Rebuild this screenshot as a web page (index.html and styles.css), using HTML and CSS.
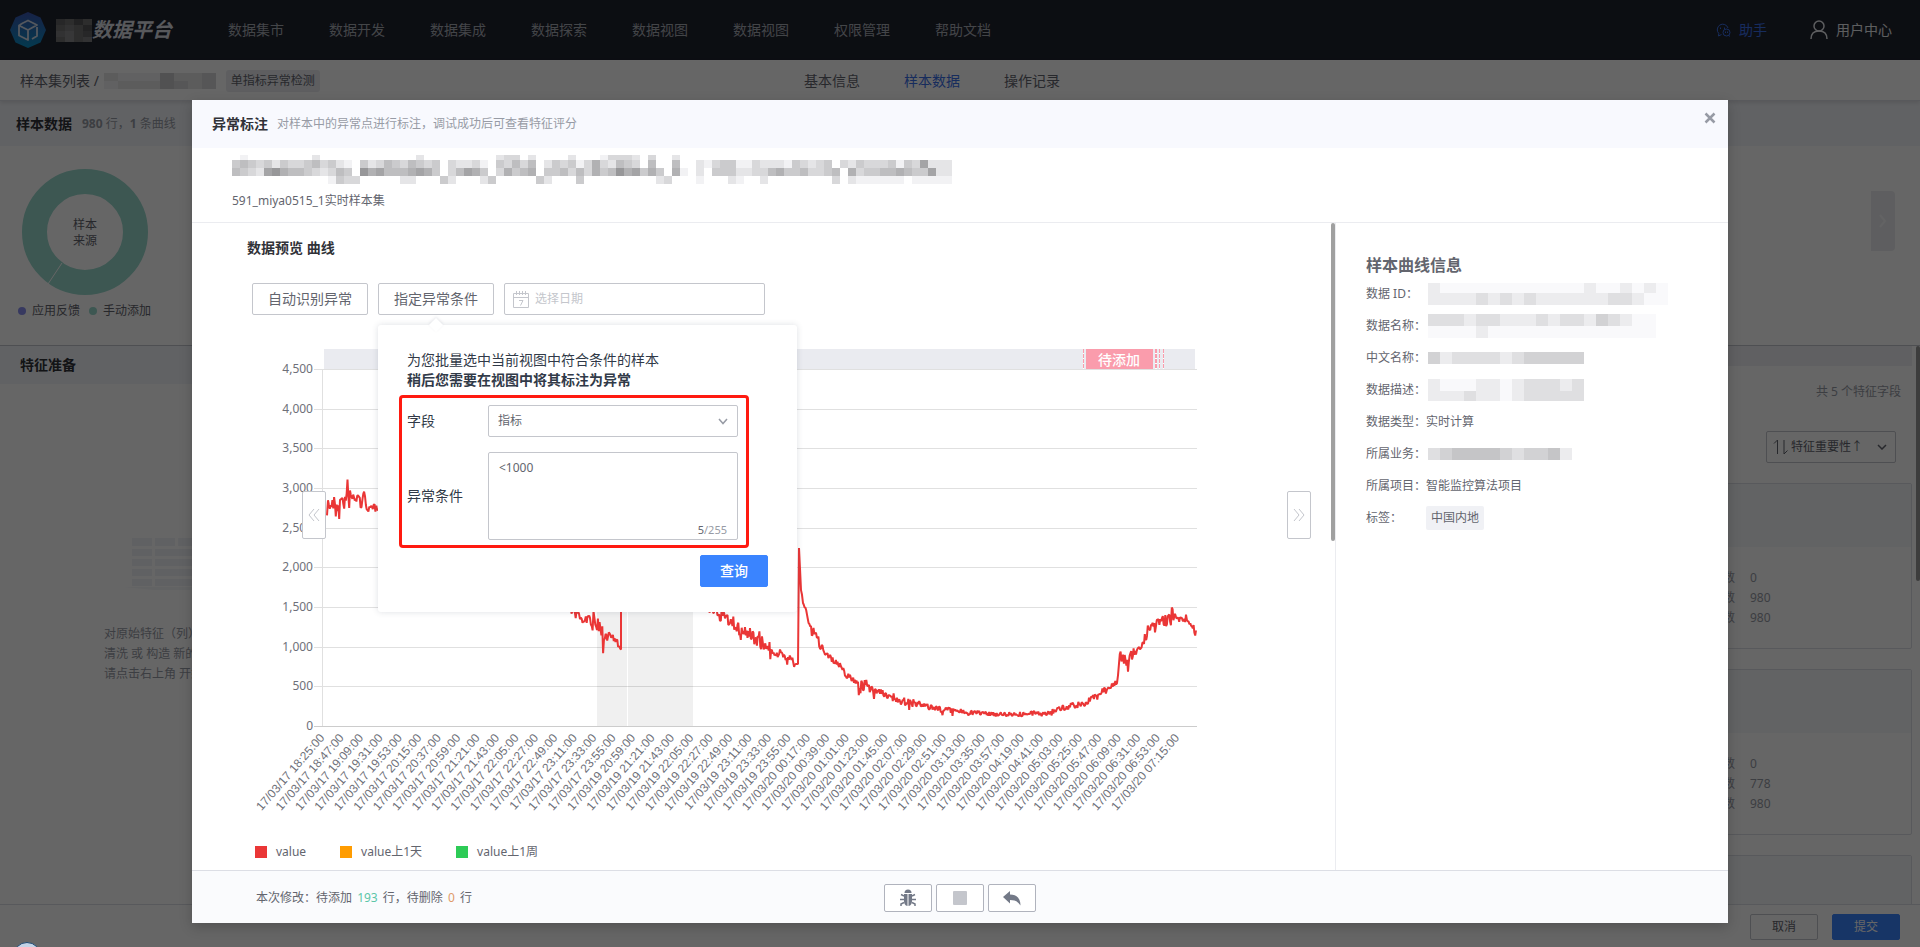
FILE: index.html
```html
<!DOCTYPE html>
<html lang="zh-CN">
<head>
<meta charset="utf-8">
<title>数据平台</title>
<link rel="stylesheet" href="styles.css">
</head>
<body>
<div class="page">
  <header class="topbar">
    <svg class="logo" viewBox="0 0 36 36" aria-hidden="true">
      <defs><linearGradient id="lg" x1="0" y1="0" x2="0" y2="1"><stop offset="0" stop-color="#3b55b0"/><stop offset="1" stop-color="#0a8fc4"/></linearGradient></defs>
      <path d="M18 0 30.500 5.500 36 18 30.500 30.500 18 36 5.500 30.500 0 18 5.500 5.500Z" fill="url(#lg)"/>
      <path d="M12 11.500 18 8.500 27 13 18 18 12 15M27 15v9l-5 3M18 18v10l-9-4.500V13.500l3-2M9 13.500l9 4.500" fill="none" stroke="#d3dcea" stroke-width="1.800" stroke-linejoin="round"/>
    </svg>
    <svg class="mosaic" data-cell="9" data-heights="6,6,6,5" data-rows="cbdb|babd|a9bc|b9ba"></svg>
    <strong class="brand">数据平台</strong>
    <nav class="nav">
      <a href="#">数据集市</a><a href="#">数据开发</a><a href="#">数据集成</a><a href="#">数据探索</a><a href="#">数据视图</a><a href="#">数据视图</a><a href="#">权限管理</a><a href="#">帮助文档</a>
    </nav>
    <a class="helper" href="#">
      <svg width="15" height="14" viewBox="0 0 15 14" fill="none" stroke="currentColor"><path d="M5.500 11.500 2.500 13l.3-2.500A5.500 5.500 0 1 1 12 5M4.500 4.500v1.500M8.500 4.500v1.500"/><circle cx="10.500" cy="9.500" r="3.500"/><path d="M9.500 8.500V10M11.500 8.500V10M12.500 12.500l1.500.8"/></svg>
      <span>助手</span>
    </a>
    <a class="user" href="#">
      <svg width="18" height="20" viewBox="0 0 18 20" fill="none" stroke="currentColor" stroke-width="1.500"><circle cx="9" cy="6" r="5"/><path d="M1 19c0-5 3-8 8-8s8 3 8 8"/></svg>
      <span>用户中心</span>
    </a>
  </header>
  <div class="subbar">
    <a class="crumb" href="#">样本集列表 /</a>
    <svg class="mosaic" data-cell="14" data-heights="8,8" data-rows="21114223|12224323"></svg>
    <span class="tag">单指标异常检测</span>
    <nav class="tabs"><a href="#">基本信息</a><a class="on" href="#">样本数据</a><a href="#">操作记录</a></nav>
  </div>
  <section class="sample">
    <div class="panel-head"><h2>样本数据</h2><span><b>980</b> 行，<b>1</b> 条曲线</span></div>
    <div class="sample-body">
      <div class="donut-box">
        <svg width="126" height="126" viewBox="0 0 126 126">
          <circle cx="63" cy="63" r="50.500" fill="none" stroke="#98d9cd" stroke-width="25"/>
          <path d="M40 94 26 115" stroke="#fff"/>
          <text x="63" y="60" text-anchor="middle">样本</text><text x="63" y="76" text-anchor="middle">来源</text>
        </svg>
        <div class="dots"><i class="dot violet"></i>应用反馈<i class="dot teal"></i>手动添加</div>
      </div>
      <button class="slide" aria-label="下一页"><svg width="8" height="14" viewBox="0 0 8 14" fill="none" stroke="#f8f8fa" stroke-width="2"><path d="m1 1 5 6-5 6"/></svg></button>
    </div>
  </section>
  <section class="features">
    <div class="feat-left">
      <div class="panel-head"><h2>特征准备</h2></div>
      <div class="empty">
        <svg width="120" height="52" viewBox="0 0 120 52" fill="#f0f2f7"><path d="M0 49h110L70 52H30Z" opacity=".6"/><path d="M8 0h20v8H8zM31 0h20v8H31zM54 0h40v8H54zM8 11h20v7H8zM31 11h60v7H31zM8 21h20v7H8zM31 21h60v7H31zM8 31h20v7H8zM31 31h60v7H31zM8 41h20v7H8zM31 41h60v7H31z"/></svg>
        <p>对原始特征（列）进行</p><p>清洗 或 构造 新的特征</p><p>请点击右上角 开始</p>
      </div>
    </div>
    <div class="feat-right">
      <div class="strip"></div>
      <p class="total">共 5 个特征字段</p>
      <button class="sorter">
        <svg width="16" height="16" viewBox="0 0 16 16" fill="none" stroke="currentColor"><path d="M1 4.500 4.500 1v14M11 1v14l3.500-3.500"/></svg>
        <span>特征重要性↑</span>
        <svg class="sort-caret" width="10" height="6" viewBox="0 0 10 6" fill="none" stroke="#63656e" stroke-width="1.500"><path d="m1 1 4 4 4-4"/></svg>
      </button>
      <article class="card"><div class="card-head"></div><dl><dt>数</dt><dd>0</dd><dt>数</dt><dd>980</dd><dt>数</dt><dd>980</dd></dl></article>
      <article class="card"><div class="card-head"></div><dl><dt>数</dt><dd>0</dd><dt>数</dt><dd>778</dd><dt>数</dt><dd>980</dd></dl></article>
      <article class="card"><div class="card-head"></div></article>
    </div>
  </section>
  <footer class="page-foot"><button class="btn-line">取消</button><button class="btn-fill">提交</button></footer>
</div>

<div class="overlay">
  <div class="dialog" role="dialog" aria-labelledby="dlg-title">
    <header class="dlg-head">
      <h1 id="dlg-title">异常标注</h1><span>对样本中的异常点进行标注，调试成功后可查看特征评分</span>
      <button class="close" aria-label="关闭"><svg width="12" height="12" viewBox="0 0 12 12" stroke="#979ba5" stroke-width="2.500"><path d="m1.500 1.500 9 9M10.500 1.500l-9 9"/></svg></button>
    </header>
    <div class="dlg-name">
      <svg class="mosaic" data-cell="8" data-heights="5,8,8,8" data-rows="0100000000200000000000020000000002330200002000133320300200|454342433453421042354354340322310435350243413632543050050021344113222143234032433341437222|543278655432354086755567640357640364560445353645867464061020444223356445334506344556544722|000000000000143300000220004200024000004200040000000002300010002100200000000302111111011111"></svg>
      <p>591_miya0515_1实时样本集</p>
    </div>
    <div class="dlg-body">
      <main class="preview">
        <h2>数据预览 曲线</h2>
        <div class="tools">
          <button class="tool">自动识别异常</button>
          <div class="anchor">
            <button class="tool">指定异常条件</button>
            <form class="pop">
              <p>为您批量选中当前视图中符合条件的样本</p>
              <p><b>稍后您需要在视图中将其标注为异常</b></p>
              <div class="marked">
                <label for="field">字段</label>
                <div class="control">
                  <select id="field"><option>指标</option></select>
                  <svg class="caret" width="10" height="7" viewBox="0 0 10 7" fill="none" stroke="#979ba5" stroke-width="1.500"><path d="m1 1 4 4.500L9 1"/></svg>
                </div>
                <label for="cond">异常条件</label>
                <div class="control">
                  <textarea id="cond">&lt;1000</textarea>
                  <span class="count"><b>5</b>/255</span>
                </div>
              </div>
              <button type="button" class="query">查询</button>
            </form>
          </div>
          <label class="date">
            <svg width="16" height="17" viewBox="0 0 16 17" fill="none" stroke="#c4c6cc"><path d="M.5 2.500h15v14H.5zM.5 6.500h15M3.500 0v4M6.500 0v4M9.500 0v4M12.500 0v4M6 9.500h4L7.500 14.500"/></svg>
            <input type="text" placeholder="选择日期" aria-label="选择日期">
          </label>
        </div>
        <div class="chart">
          <svg id="plot" viewBox="252 340 1060 480" role="img" aria-label="value 曲线"></svg>
          <button class="page-btn prev" aria-label="向前"><svg width="12" height="14" viewBox="0 0 12 14" fill="none" stroke="#c4c6cc"><path d="M6 1 1 7l5 6M11 1 6 7l5 6"/></svg></button>
          <button class="page-btn next" aria-label="向后"><svg width="12" height="14" viewBox="0 0 12 14" fill="none" stroke="#c4c6cc"><path d="m1 1 5 6-5 6M6 1l5 6-5 6"/></svg></button>
        </div>
        <ul class="legend"><li><i class="red"></i>value</li><li><i class="amber"></i>value上1天</li><li><i class="green"></i>value上1周</li></ul>
        <div class="scroll"></div>
      </main>
      <aside class="info">
        <h2>样本曲线信息</h2>
        <dl>
          <dt>数据 ID：</dt><dd><svg class="mosaic" data-cell="12" data-heights="10,12" data-rows="10000000000001001010|11112121211111122100"></svg></dd>
          <dt>数据名称：</dt><dd><svg class="mosaic" data-cell="12" data-heights="12,12" data-rows="2221221112122132100|0000100000000000000"></svg></dd>
          <dt>中文名称：</dt><dd><svg class="mosaic" data-cell="12" data-heights="12" data-rows="3122221233333"></svg></dd>
          <dt>数据描述：</dt><dd><svg class="mosaic" data-cell="12" data-heights="12,10" data-rows="1000110122212|1112110122222"></svg></dd>
          <dt>数据类型：</dt><dd>实时计算</dd>
          <dt>所属业务：</dt><dd><svg class="mosaic" data-cell="12" data-heights="12" data-rows="234444323341"></svg></dd>
          <dt>所属项目：</dt><dd>智能监控算法项目</dd>
          <dt>标签：</dt><dd><span class="chip">中国内地</span></dd>
        </dl>
      </aside>
    </div>
    <footer class="dlg-foot">
      <p>本次修改：待添加 <em class="add">193</em> 行，待删除 <em class="del">0</em> 行</p>
      <div class="acts">
        <button aria-label="调试"><svg width="16" height="18" viewBox="0 0 16 18"><path d="M4.500 4a3.500 3.500 0 0 1 7 0Z" fill="#737987"/><path d="M4 5h3.500v12C5 16.800 4 14.500 4 12ZM8.500 5H12v7c0 2.500-1 4.800-3.500 5Z" fill="#737987"/><path d="M1 5.500 4 7M15 5.500 12 7M0 10.500h4M12 10.500h4M1 17v-2l3-1.500M15 17v-2l-3-1.500" stroke="#737987" stroke-width="1.500" fill="none"/></svg></button>
        <button aria-label="停止"><svg width="14" height="14"><rect width="14" height="14" rx="1" fill="#c4c6cc"/></svg></button>
        <button aria-label="撤销"><svg width="18" height="15" viewBox="0 0 18 15"><path d="M7 0v3.500c7 0 10.500 4 10.500 11C15 10.500 12 9 7 9v3.500L0 6Z" fill="#737987"/></svg></button>
      </div>
    </footer>
  </div>
</div>
<div class="bubble"></div>
<script src="chart.js"></script>
</body>
</html>
```
FILE: styles.css
```css
* { box-sizing: border-box; }
body, h1, h2, p, ul, dl, dd { margin: 0; padding: 0; }
body {
  height: 100vh;
  overflow: hidden;
  position: relative;
  background: #fff;
  color: #63656e;
  font: 12px/20px "Noto Sans", "Noto Sans CJK SC", sans-serif;
}
a { color: inherit; text-decoration: none; }
button, input, select, textarea { font: inherit; color: inherit; margin: 0; }
button { display: inline-flex; align-items: center; justify-content: center; padding: 0; background: #fff; border: 1px solid #c4c6cc; border-radius: 2px; }
h1, h2 { font-size: 14px; line-height: 20px; color: #313238; }
svg { display: block; flex: none; }

.page { height: 100vh; display: flex; flex-direction: column; }
.topbar { height: 60px; flex: none; display: flex; align-items: center; padding: 0 28px 0 10px; background: #20232f; color: #a8acb5; font-size: 14px; }
.logo { width: 36px; height: 36px; margin-right: 10px; }
.brand { font-size: 20px; font-style: italic; color: #dcdfe5; }
.nav { display: flex; gap: 45px; margin-left: 56px; }
.helper, .user { display: flex; align-items: center; gap: 8px; }
.helper { margin-left: auto; color: #3a6fe8; }
.user { margin-left: 43px; color: #e8eaee; }

.subbar { position: relative; height: 41px; flex: none; display: flex; align-items: center; padding: 1px 20px 0; border-bottom: 1px solid #dcdee5; box-shadow: 0 2px 4px rgba(0,0,0,.1); font-size: 14px; }
.crumb { margin-right: 5px; }
.tag { margin-left: 10px; padding: 0 5px; line-height: 22px; background: #ebecf1; border-radius: 3px; font-size: 12px; }
.tabs { position: absolute; left: 0; right: 0; display: flex; justify-content: center; gap: 44px; padding-right: 56px; }
.tabs .on { color: #3a6fe8; }

.panel-head { display: flex; align-items: center; gap: 10px; padding: 0 16px; height: 45px; background: #f3f5fa; color: #979ba5; }
.sample { height: 245px; flex: none; border-bottom: 1px solid #c4c6cc; }
.sample-body { display: flex; justify-content: space-between; align-items: flex-start; padding: 23px 25px 0 18px; }
.donut-box { padding-left: 4px; }
.donut-box text { font-size: 12px; fill: #63656e; }
.dots { display: flex; align-items: center; gap: 6px; margin: 6px 0 0 -4px; }
.dot { width: 8px; height: 8px; border-radius: 50%; }
.violet { background: #8a8ff0; }
.teal { background: #98d9cd; margin-left: 3px; }
.slide { width: 24px; height: 60px; margin-top: 22px; border: 0; background: #ebecf0; border-radius: 0 4px 4px 0; }

.features { flex: 1; min-height: 0; overflow: hidden; display: flex; }
.feat-left, .feat-right { flex: 1; }
.feat-left .panel-head { height: 38px; padding-left: 20px; }
.empty { padding: 154px 0 0 104px; color: #979ba5; }
.empty svg { margin: 0 0 34px 20px; }
.feat-right { position: relative; padding-right: 8px; display: flex; flex-direction: column; }
.feat-right::after { content: ""; position: absolute; right: 0; top: 0; width: 4px; height: 235px; border-radius: 2px; background: #9a9a9a; }
.strip { flex: none; height: 20px; background: #eff0f5; }
.total { margin: 16px 11px 0; text-align: right; color: #979ba5; }
.sorter { align-self: flex-end; flex: none; width: 130px; height: 32px; margin: 29px 16px 20px; gap: 2px; padding: 0 8px 0 6px; justify-content: flex-start; background: none; }
.sort-caret { margin-left: auto; }
.card { flex: none; height: 166px; margin-bottom: 20px; border: 1px solid #dcdee5; border-radius: 2px; }
.card-head { height: 63px; background: #f5f7fb; }
.card dl { display: grid; grid-template-columns: 12px 161px; column-gap: 15px; justify-content: end; padding-top: 21px; color: #979ba5; }
.page-foot { height: 43px; flex: none; display: flex; justify-content: flex-end; gap: 14px; padding: 9px 20px; border-top: 1px solid #dcdee5; }
.btn-line, .btn-fill { width: 68px; height: 26px; }
.btn-fill { background: #3a84ff; border-color: #3a84ff; color: #fff; }

.overlay { position: absolute; inset: 0; display: flex; padding: 100px 10% 24px; background: rgba(0,0,0,.6); }
.dialog { flex: 1; min-width: 0; display: flex; flex-direction: column; background: #fff; box-shadow: 0 4px 12px rgba(0,0,0,.2); }
.dlg-head { position: relative; flex: none; height: 48px; display: flex; align-items: center; gap: 9px; padding-left: 20px; background: #f8f9fe; color: #979ba5; }
.close { position: absolute; right: 12px; top: 12px; border: 0; background: none; }
.dlg-name { flex: none; height: 75px; padding: 7px 40px 0; border-bottom: 1px solid #ebecf0; }
.dlg-name p { margin-top: 7px; }
.dlg-body { flex: 1; min-height: 0; display: flex; }
.preview { position: relative; flex: 1; min-width: 0; padding: 15px 23px 0 60px; }
.preview h2 { margin-left: -5px; }
.tools { display: flex; gap: 10px; margin-top: 25px; }
.tool { width: 116px; height: 32px; font-size: 14px; }
.anchor { position: relative; z-index: 2; }
.date { width: 261px; height: 32px; display: flex; align-items: center; gap: 6px; padding: 0 8px; border: 1px solid #c4c6cc; border-radius: 2px; }
.date input { flex: 1; min-width: 0; border: 0; padding: 0; }
.date input::placeholder { color: #c4c6cc; }

.pop { position: absolute; top: 42px; left: 0; width: 419px; height: 287px; padding: 25px 21px; background: #fff; border-radius: 3px; box-shadow: 0 0 6px rgba(50,60,90,.16); color: #313a48; font-size: 14px; }
.pop::before { content: ""; position: absolute; left: 53px; top: -5px; width: 10px; height: 10px; background: #fff; transform: rotate(45deg); box-shadow: -1px -1px 3px rgba(50,60,90,.1); }
.pop p { padding-left: 8px; }
.marked { display: grid; grid-template-columns: 81px 250px; row-gap: 15px; align-items: center; width: 350px; margin-top: 5px; padding: 7px 0 5px 5px; border: 3px solid #ff1a10; border-radius: 4px; }
.control { position: relative; display: flex; font-size: 12px; color: #63656e; }
.control select, .control textarea { width: 100%; border: 1px solid #c4c6cc; border-radius: 2px; background: #fff; appearance: none; padding: 5px 9px; }
.control select { height: 32px; }
.control textarea { height: 88px; resize: none; padding-left: 10px; }
.caret { position: absolute; right: 10px; top: 13px; }
.count { position: absolute; right: 11px; bottom: 0; font-size: 11px; color: #979ba5; }
.count b { font-weight: 400; color: #63656e; }
.query { width: 68px; height: 32px; margin: 7px 8px 0 auto; display: flex; background: #3a84ff; border-color: #3a84ff; color: #fff; font-weight: 500; }

.chart { position: relative; margin-top: 25px; }
#plot { width: 100%; height: auto; }
#plot text { font-size: 12px; fill: #6e7079; }
#plot .tick { font-family: "Liberation Sans", Arial, sans-serif; }
#plot .flag { font-size: 14px; font-weight: 500; fill: #fff; }
.page-btn { position: absolute; top: 151px; width: 24px; height: 48px; }
.prev { left: 50px; }
.next { right: 1px; }
.legend { display: flex; gap: 34px; margin: 22px 0 0 3px; list-style: none; }
.legend li { display: flex; align-items: center; gap: 9px; }
.legend i { width: 12px; height: 12px; }
.red { background: #ea3636; }
.amber { background: #ff9c01; }
.green { background: #2dcb56; }
.scroll { position: absolute; right: 0; top: 0; width: 4px; height: 318px; border-radius: 2px; background: #a0a0a0; }

.info { flex: none; width: 393px; padding: 32px 30px 0; border-left: 1px solid #ebecf0; }
.info h2 { font-size: 16px; color: #63656e; }
.info dl { display: grid; grid-template-columns: 60px 1fr; grid-auto-rows: 32px; align-items: center; margin-top: 3px; }
.info .mosaic { margin-left: 2px; }
.chip { display: inline-block; padding: 0 5px; line-height: 24px; border-radius: 2px; background: #f0f1f5; }

.dlg-foot { position: relative; flex: none; height: 53px; display: flex; align-items: center; padding: 2px 64px 0; border-top: 1px solid #dcdee5; background: #fafbfd; }
.dlg-foot em { font-style: normal; margin: 0 2px; }
.add { color: #5cc6a8; }
.del { color: #e09a6a; }
.acts { position: absolute; left: 0; right: 0; display: flex; justify-content: center; gap: 4px; pointer-events: none; }
.acts button { width: 48px; height: 28px; border-color: #b0b3bd; pointer-events: auto; }
.bubble { position: absolute; left: 13px; bottom: -23px; width: 28px; height: 28px; border-radius: 50%; border: 1px solid #1f4a73; background: #c3d3e6; }
```
FILE: chart.js
```js
const NS = 'http://www.w3.org/2000/svg';
function add(parent, name, attrs, text) {
  const el = document.createElementNS(NS, name);
  for (const key in attrs) el.setAttribute(key, attrs[key]);
  if (text) el.textContent = text;
  parent.appendChild(el);
  return el;
}

// Masked names: one hex digit per block, a higher digit is darker.
document.querySelectorAll('.mosaic').forEach(svg => {
  const cell = Number(svg.dataset.cell);
  const heights = svg.dataset.heights.split(',').map(Number);
  const rows = svg.dataset.rows.split('|');
  const floor = cell === 12 ? 6 : 0;
  const columns = Math.max(...rows.map(row => row.length));
  let y = 0;
  rows.forEach((row, r) => {
    [...row].forEach((ch, c) => {
      const shade = 255 - floor - parseInt(ch, 16) * 13;
      add(svg, 'rect', { x: c * cell, y, width: cell, height: heights[r], fill: `rgb(${shade},${shade},${shade + 2})` });
    });
    y += heights[r];
  });
  svg.setAttribute('width', columns * cell);
  svg.setAttribute('height', y);
});

const plot = document.getElementById('plot');
const left = 322, right = 1197, zero = 726, step = 39.65;

add(plot, 'rect', { x: 324, y: 349, width: 871, height: 20, fill: '#eaebf0' });
for (let i = 0; i <= 9; i++) {
  const y = Math.round(zero - i * step) + 0.5;
  add(plot, 'line', { x1: 314, x2: right, y1: y, y2: y, stroke: i ? '#e0e0e0' : '#ccc' });
  add(plot, 'text', { x: 313, y: y + 3, 'text-anchor': 'end' }, (i * 500).toLocaleString('en-US'));
}
add(plot, 'line', { x1: left + 0.5, x2: left + 0.5, y1: 369, y2: zero, stroke: '#e0e0e0' });

[[597, 30], [628, 65]].forEach(([x, width]) =>
  add(plot, 'rect', { x, y: 369, width, height: 357, fill: '#000', opacity: 0.06 }));

add(plot, 'rect', { x: 1086, y: 349, width: 67, height: 20, fill: '#fa9cac' });
[1083.5, 1155.5, 1156.5, 1159.5, 1163.5].forEach(x => {
  add(plot, 'line', { x1: x, x2: x, y1: 349, y2: 369, stroke: '#fff' });
  add(plot, 'line', { x1: x, x2: x, y1: 349, y2: 369, stroke: '#fa9cac', 'stroke-dasharray': '4 1' });
});
add(plot, 'text', { x: 1119, y: 365, 'text-anchor': 'middle', class: 'flag' }, '待添加');

function times(day, start, count) {
  return Array.from({ length: count }, (_, i) => {
    const minutes = start + i * 22;
    const hh = String(Math.floor(minutes / 60)).padStart(2, '0');
    const mm = String(minutes % 60).padStart(2, '0');
    return `17/03/${day} ${hh}:${mm}:00`;
  });
}
const labels = [...times(17, 1105, 16), ...times(19, 1259, 9), ...times(20, 17, 20)];
labels.forEach((label, i) => {
  const x = 319 + i * 19.43;
  add(plot, 'text', { class: 'tick', 'text-anchor': 'end', transform: `translate(${x} 733) rotate(-49)`, dy: 8 }, label);
});

// Anchor points: x, y, noise.
const series = [
  [326, 516, 2], [328, 504, 8], [335, 505, 11], [345, 501, 12], [350, 498, 14], [358, 499, 9],
  [365, 503, 12], [371, 511, 6], [378, 504, 8], [560, 602, 8], [574, 611, 6], [580, 617, 10], [590, 620, 7],
  [597, 627, 9], [604, 635, 12], [612, 637, 6], [619, 645, 4], [621, 649, 2], [621, 560, 0],
  [700, 600, 4], [714, 612, 7], [725, 617, 8], [735, 627, 6], [750, 634, 9], [762, 643, 9], [772, 650, 8],
  [780, 654, 6], [788, 659, 4], [795, 664, 6], [798, 664, 0], [799, 548, 0], [801, 590, 1], [803, 602, 2],
  [807, 613, 4], [811, 630, 5], [816, 636, 7], [820, 645, 5], [825, 651, 5], [831, 658, 4], [840, 667, 5],
  [850, 678, 5], [858, 683, 4], [868, 687, 8], [880, 692, 6], [892, 698, 4], [905, 701, 4], [920, 705, 5],
  [940, 709, 4], [955, 711, 4], [980, 713, 3], [1000, 714, 3], [1030, 714, 3], [1050, 712, 3], [1070, 706, 4],
  [1085, 704, 4], [1093, 697, 4], [1105, 690, 4], [1117, 682, 3], [1118, 675, 1], [1119, 662, 4], [1128, 659, 10],
  [1136, 651, 7], [1144, 643, 3], [1147, 632, 9], [1155, 628, 9], [1162, 621, 9], [1175, 619, 8],
  [1186, 620, 4], [1192, 624, 4], [1196, 634, 5]
];
let seed = 7;
const random = () => (seed = (seed * 16807) % 2147483647) / 2147483647;
const points = [];
for (let i = 1; i < series.length; i++) {
  const [x0, y0] = series[i - 1], [x1, y1, noise] = series[i];
  const n = Math.max(1, Math.round((x1 - x0) * 1.2));
  for (let k = 1; k <= n; k++) {
    const t = k / n;
    const boost = random() > 0.9 ? 1.6 : 0.8;
    points.push(`${(x0 + (x1 - x0) * t).toFixed(1)},${(y0 + (y1 - y0) * t + (random() * 2 - 1) * noise * boost).toFixed(1)}`);
  }
}
add(plot, 'polyline', { points: points.join(' '), fill: 'none', stroke: '#ea3636', 'stroke-width': 2, 'stroke-linejoin': 'bevel' });
```
